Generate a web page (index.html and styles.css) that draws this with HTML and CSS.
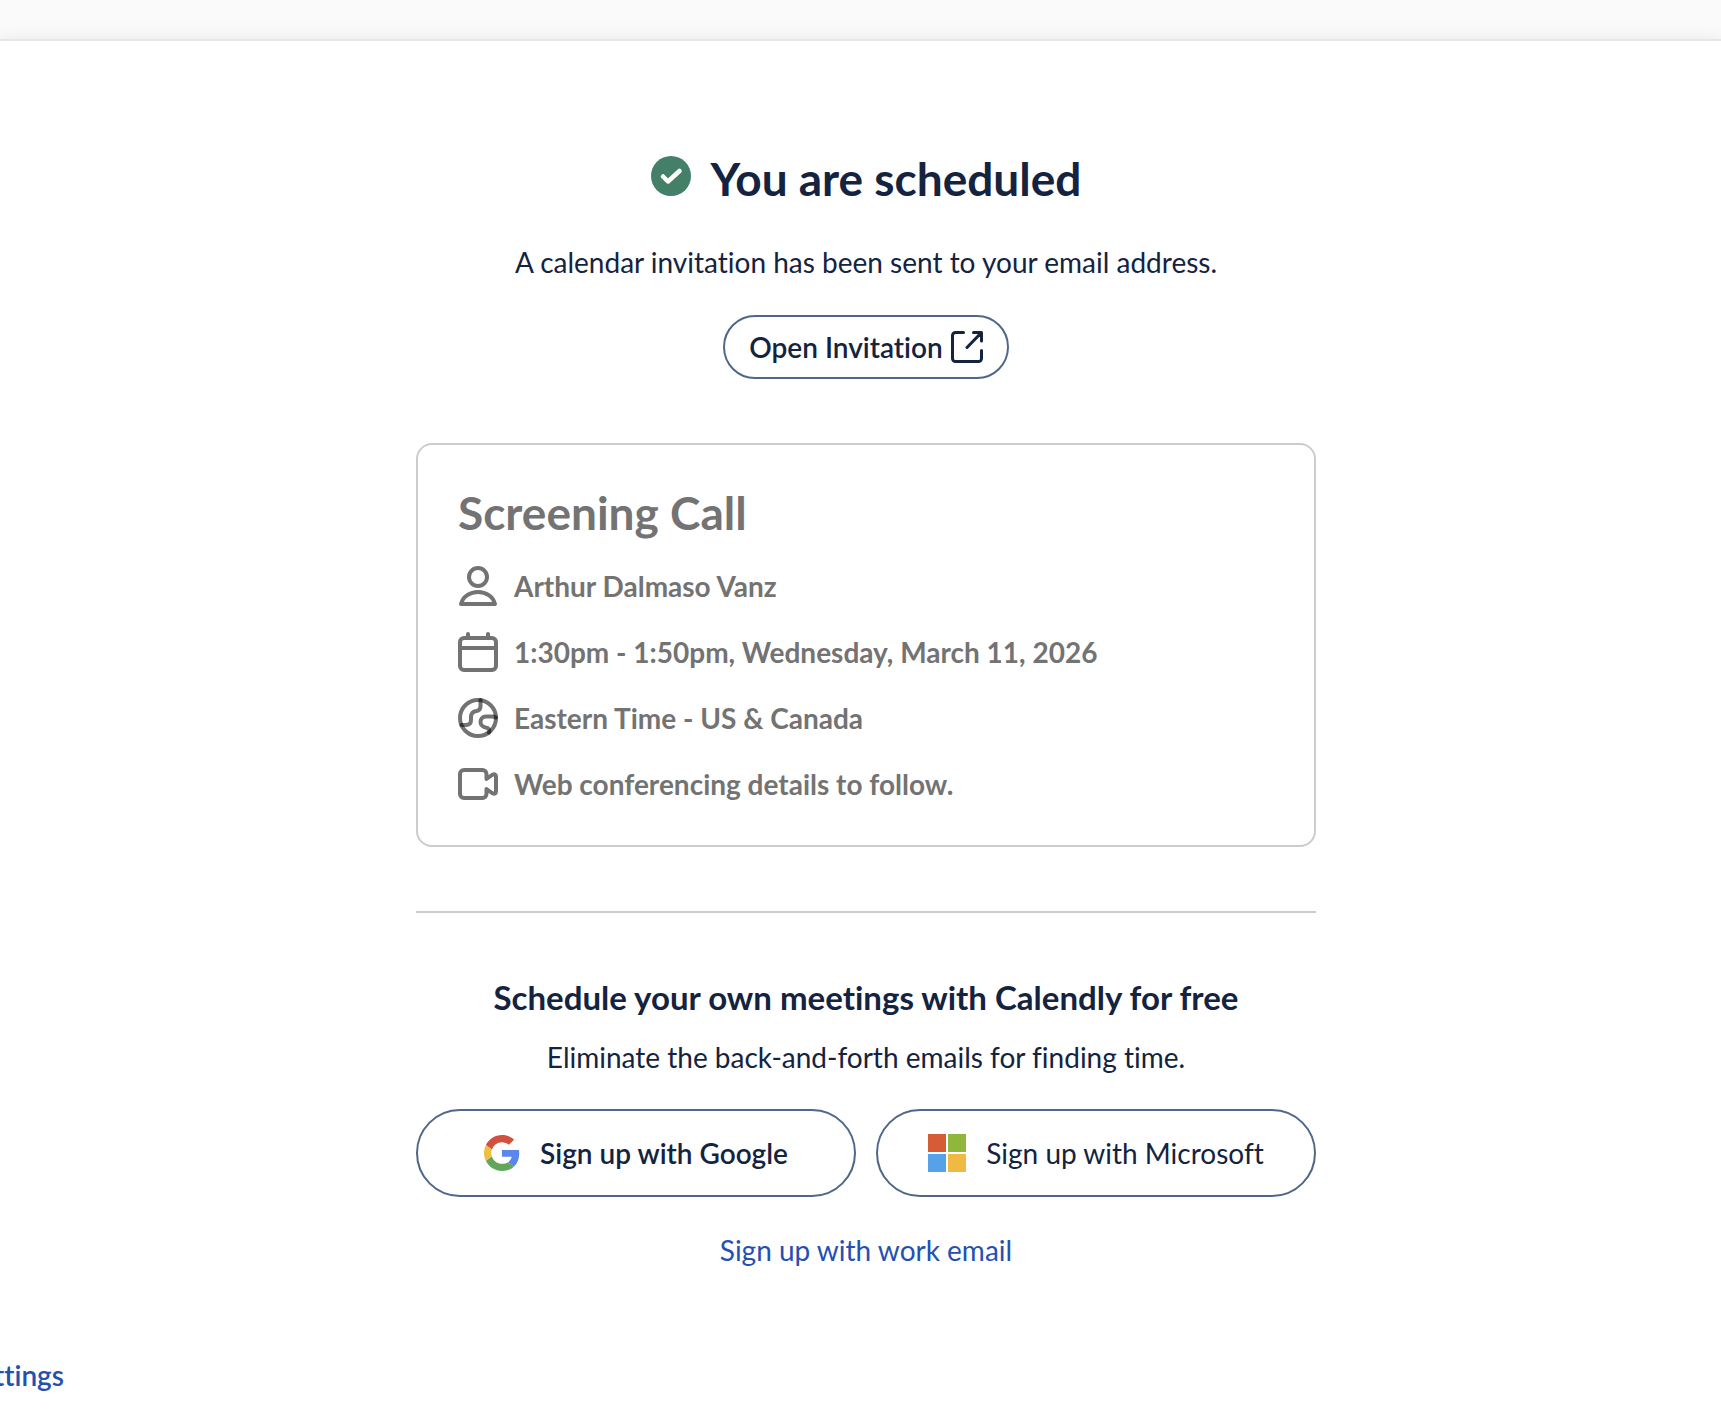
FILE: index.html
```html
<!DOCTYPE html>
<html lang="en">
<head>
  <meta charset="UTF-8">
  <meta name="viewport" content="width=device-width, initial-scale=1.0">
  <title>You are scheduled - Calendly</title>
  <link rel="stylesheet" href="styles.css">
</head>
<body>

  <main class="panel">
    <div class="content">

      <h1 class="title">
        <svg class="title-icon" viewBox="0 0 40 40" aria-hidden="true">
          <circle cx="20" cy="20" r="20" fill="#447f67"/>
          <path d="M12 20.500l5 5L28.500 15" fill="none" stroke="#fff" stroke-width="4.500" stroke-linecap="round" stroke-linejoin="round"/>
        </svg>
        You are scheduled
      </h1>

      <p class="text">A calendar invitation has been sent to your email address.</p>

      <a class="btn btn-small" href="#invitation">
        Open Invitation
        <svg class="btn-small-icon" viewBox="0 0 32 32" aria-hidden="true">
          <path d="M12.500 1.500H4.500A3 3 0 0 0 1.500 4.500v23A3 3 0 0 0 4.500 30.500h23a3 3 0 0 0 3-3V19.500M22.500 1.500h8v8.500M30 2L16 16.500"/>
        </svg>
      </a>

      <section class="card">
        <h2 class="card-title">Screening Call</h2>
        <ul class="details">
          <li>
            <svg class="icon" viewBox="0 0 40 40" aria-hidden="true">
              <circle cx="20" cy="11" r="9"/>
              <path d="M3 38c2-7.500 9-12 17-12s15 4.500 17 12z"/>
            </svg>
            Arthur Dalmaso Vanz
          </li>
          <li>
            <svg class="icon" viewBox="0 0 40 40" aria-hidden="true">
              <rect x="2" y="6" width="36" height="32" rx="4"/>
              <path d="M2 16h36M10 2v4M30 2v4"/>
            </svg>
            1:30pm - 1:50pm, Wednesday, March 11, 2026
          </li>
          <li>
            <svg class="icon icon-globe" viewBox="0 0 40 40" aria-hidden="true">
              <circle cx="20" cy="20" r="18"/>
              <path d="M22.500 2v6.500c0 2.500-1.500 4-4 4.500-4 .5-5.500 2.500-5.500 6v3c0 3.500-2 5-5 5H3.500"/>
              <path d="M38 19.500l-3-1h-7c-3.500 0-5.500 2.500-5.500 5.500s2.500 5 5 5.500c3 .5 4.500 2 3.500 5"/>
            </svg>
            Eastern Time - US &amp; Canada
          </li>
          <li>
            <svg class="icon" viewBox="0 0 40 40" aria-hidden="true">
              <path d="M6 6h18.500a4 4 0 0 1 4 4v5l5.500-4q4-2 4 2v14q0 4-4 2l-5.500-4v5a4 4 0 0 1-4 4H6a4 4 0 0 1-4-4V10a4 4 0 0 1 4-4z"/>
            </svg>
            Web conferencing details to follow.
          </li>
        </ul>
      </section>

      <hr class="divider">

      <h3 class="subtitle">Schedule your own meetings with Calendly for free</h3>
      <p class="text">Eliminate the back-and-forth emails for finding time.</p>

      <div class="signup">
        <button class="btn btn-google" type="button">
          <svg class="logo-google" viewBox="0 0 48 48" aria-hidden="true">
            <path fill="#d1503f" d="M24 9.500c3.540 0 6.710 1.220 9.210 3.600l6.850-6.850C35.900 2.380 30.470 0 24 0 14.620 0 6.510 5.380 2.560 13.220l7.980 6.190C12.430 13.720 17.740 9.500 24 9.500z"/>
            <path fill="#5a86ee" d="M46.980 24.550c0-1.570-.15-3.090-.38-4.550H24v9.020h12.940c-.58 2.960-2.260 5.480-4.780 7.180l7.730 6c4.510-4.180 7.090-10.360 7.090-17.650z"/>
            <path fill="#eebf43" d="M10.530 28.590c-.48-1.450-.76-2.990-.76-4.590s.27-3.140.76-4.590l-7.980-6.190C.92 16.460 0 20.120 0 24s.92 7.540 2.560 10.780l7.970-6.190z"/>
            <path fill="#62a65b" d="M24 48c6.480 0 11.930-2.130 15.890-5.810l-7.730-6c-2.150 1.450-4.920 2.300-8.160 2.300-6.260 0-11.570-4.220-13.470-9.910l-7.980 6.190C6.510 42.620 14.620 48 24 48z"/>
          </svg>
          Sign up with Google
        </button>
        <button class="btn btn-microsoft" type="button">
          <svg class="logo-microsoft" viewBox="0 0 38 38" aria-hidden="true">
            <path fill="#d65c37" d="M0 0h18v18H0z"/>
            <path fill="#90b63c" d="M20 0h18v18H20z"/>
            <path fill="#56a1e8" d="M0 20h18v18H0z"/>
            <path fill="#efba43" d="M20 20h18v18H20z"/>
          </svg>
          Sign up with Microsoft
        </button>
      </div>

      <a class="link" href="#email">Sign up with work email</a>
    </div>

    <footer class="footer">
      <a class="link link-bold" href="#cookies">Cookie settings</a>
    </footer>
  </main>

</body>
</html>
```
FILE: styles.css
```css
* {
  box-sizing: border-box;
}

body {
  margin: 0;
  padding-top: 39px;
  min-height: 100vh;
  display: flex;
  background-color: #fafafa;
  color: #14233f;
  font-family: Lato, "Open Sans", sans-serif;
  font-size: 28px;
  font-variant-ligatures: none;
  line-height: 40px;
  overflow-x: hidden;
}

h1, h2, h3, p, ul {
  margin: 0;
  padding: 0;
}

.panel {
  flex: 1;
  min-width: 0;
  display: flex;
  flex-direction: column;
  background-color: #fff;
  border-top: 2px solid #e6e6e6;
  box-shadow: 0 0 16px rgba(0, 0, 0, 0.08);
}

.content {
  display: flex;
  flex-direction: column;
  align-items: center;
  width: 100%;
  max-width: 911px;
  margin: 0 auto;
  padding: 110px 0 0 11px;
}

.title {
  display: flex;
  gap: 20px;
  margin-bottom: 35px;
  font-size: 46px;
  line-height: 56px;
}

.title-icon {
  width: 40px;
  height: 40px;
  margin-top: 5px;
}

.text {
  text-align: center;
}

.btn {
  display: flex;
  align-items: center;
  justify-content: center;
  background-color: #fff;
  border: 2px solid #4f6788;
  border-radius: 44px;
  color: inherit;
  font: inherit;
  text-decoration: none;
  cursor: pointer;
}

.btn-small {
  gap: 8px;
  height: 64px;
  margin-top: 33px;
  padding: 0 24px;
  font-weight: 600;
}

.btn-small-icon {
  width: 32px;
  height: 32px;
  fill: none;
  stroke: #14233f;
  stroke-width: 3;
  stroke-linecap: round;
  stroke-linejoin: round;
}

.card {
  width: 100%;
  margin-top: 64px;
  padding: 40px 40px 41px;
  border: 2px solid #ccc;
  border-radius: 16px;
  color: #737373;
}

.card-title {
  margin-bottom: 25px;
  font-size: 46px;
  line-height: 56px;
}

.details {
  display: flex;
  flex-direction: column;
  gap: 26px;
  list-style: none;
  font-weight: 700;
}

.details li {
  display: flex;
  align-items: center;
  gap: 16px;
}

.icon {
  flex: none;
  width: 40px;
  height: 40px;
  fill: none;
  stroke: #737373;
  stroke-width: 4;
  stroke-linecap: round;
  stroke-linejoin: round;
}

/* strokes overlap darker where the lines meet the rim */
.icon-globe {
  stroke: rgba(0, 0, 0, 0.55);
}

.divider {
  width: 100%;
  margin: 64px 0;
  border: 0;
  border-top: 2px solid #ccc;
}

.subtitle {
  margin-bottom: 20px;
  font-size: 33px;
  line-height: 40px;
}

.signup {
  display: flex;
  gap: 20px;
  width: 100%;
  margin: 32px 0 33px;
}

.signup .btn {
  flex: 1;
  height: 88px;
}

.btn-google {
  gap: 20px;
}

.signup .btn-google {
  font-weight: 600;
}

.btn-microsoft {
  gap: 20px;
}

.logo-google {
  width: 36px;
  height: 36px;
}

.logo-microsoft {
  width: 38px;
  height: 38px;
}

.link {
  color: #2450b2;
  text-decoration: none;
  white-space: nowrap;
}

.link-bold {
  font-weight: 600;
}

/* the link runs out past the left edge */
.footer {
  display: flex;
  justify-content: flex-end;
  width: 64px;
  margin-top: 85px;
}
```
